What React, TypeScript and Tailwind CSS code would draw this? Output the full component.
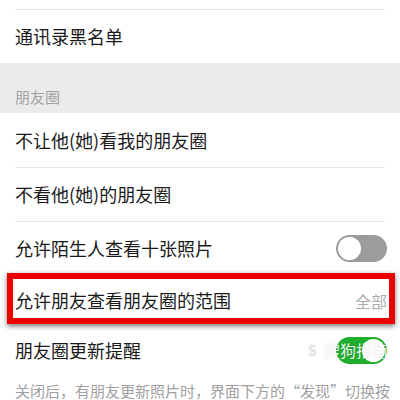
import React from 'react';

const Toggle = ({ on }: { on: boolean }) =>
  on ? (
    <div className="w-[51px] h-[27px] rounded-full bg-[#1fae2e] flex items-center justify-end p-[2px]">
      <div className="w-[23px] h-[23px] rounded-full bg-white" />
    </div>
  ) : (
    <div className="w-[51px] h-[27px] rounded-full bg-[#9c9c9c] flex items-center justify-start p-[2px]">
      <div className="w-[23px] h-[23px] rounded-full bg-white" />
    </div>
  );

const Divider = () => <div className="mx-[15px] border-t border-[#e6e6e6]" />;

interface RowProps {
  label: string;
  right?: React.ReactNode;
  className?: string;
}

const Row = ({ label, right, className = '' }: RowProps) => (
  <div className={`flex items-center justify-between pl-[15px] pr-[13px] ${className}`}>
    <span className="text-[18px] text-[#1a1a1a]">{label}</span>
    {right}
  </div>
);

export default function App() {
  return (
    <div
      className="w-[400px] h-[400px] overflow-hidden bg-white flex flex-col"
      style={{ fontFamily: '"Noto Sans CJK SC", "Noto Sans", sans-serif' }}
    >
      <div className="h-[9px] shrink-0" />
      <Divider />
      <Row label="通讯录黑名单" className="h-[53px] shrink-0" />

      <div className="h-[50px] shrink-0 bg-[#ebebeb] flex items-end pl-[15px] pb-[5px]">
        <span className="text-[15px] text-[#a3a3a3]">朋友圈</span>
      </div>

      <Row label="不让他(她)看我的朋友圈" className="h-[54px] shrink-0" />
      <Divider />
      <Row label="不看他(她)的朋友圈" className="h-[53px] shrink-0" />
      <Divider />
      <Row
        label="允许陌生人查看十张照片"
        right={<Toggle on={false} />}
        className="h-[52px] shrink-0"
      />
      <Divider />

      <div className="relative h-[51px] shrink-0">
        <Row
          label="允许朋友查看朋友圈的范围"
          right={<span className="text-[16px] text-[#ababab]">全部</span>}
          className="h-full"
        />
        <div className="absolute left-[7px] right-[5px] top-[-2px] bottom-[2px] border-[6px] border-[#ec0000] shadow-[0_2px_5px_rgba(0,0,0,0.55)]" />
      </div>

      <div className="relative h-[48px] shrink-0">
        <Row label="朋友圈更新提醒" right={<Toggle on />} className="h-full" />
        <div className="absolute left-[302px] top-[12px] flex items-center gap-[2px] text-white/90 [text-shadow:0_0_2px_rgba(0,0,0,0.15)]">
          <span className="w-[20px] h-[20px] rounded-full bg-white/70 text-[14px] leading-[20px] text-center font-bold text-[#e5e5e5]">
            S
          </span>
          <span className="text-[16px]">搜狗指南</span>
        </div>
      </div>

      <div className="pl-[15px] pt-[4px] whitespace-nowrap">
        <span className="text-[15px] leading-[22px] text-[#a0a0a0]">
          关闭后，有朋友更新照片时，界面下方的“发现”切换按
        </span>
      </div>
    </div>
  );
}
